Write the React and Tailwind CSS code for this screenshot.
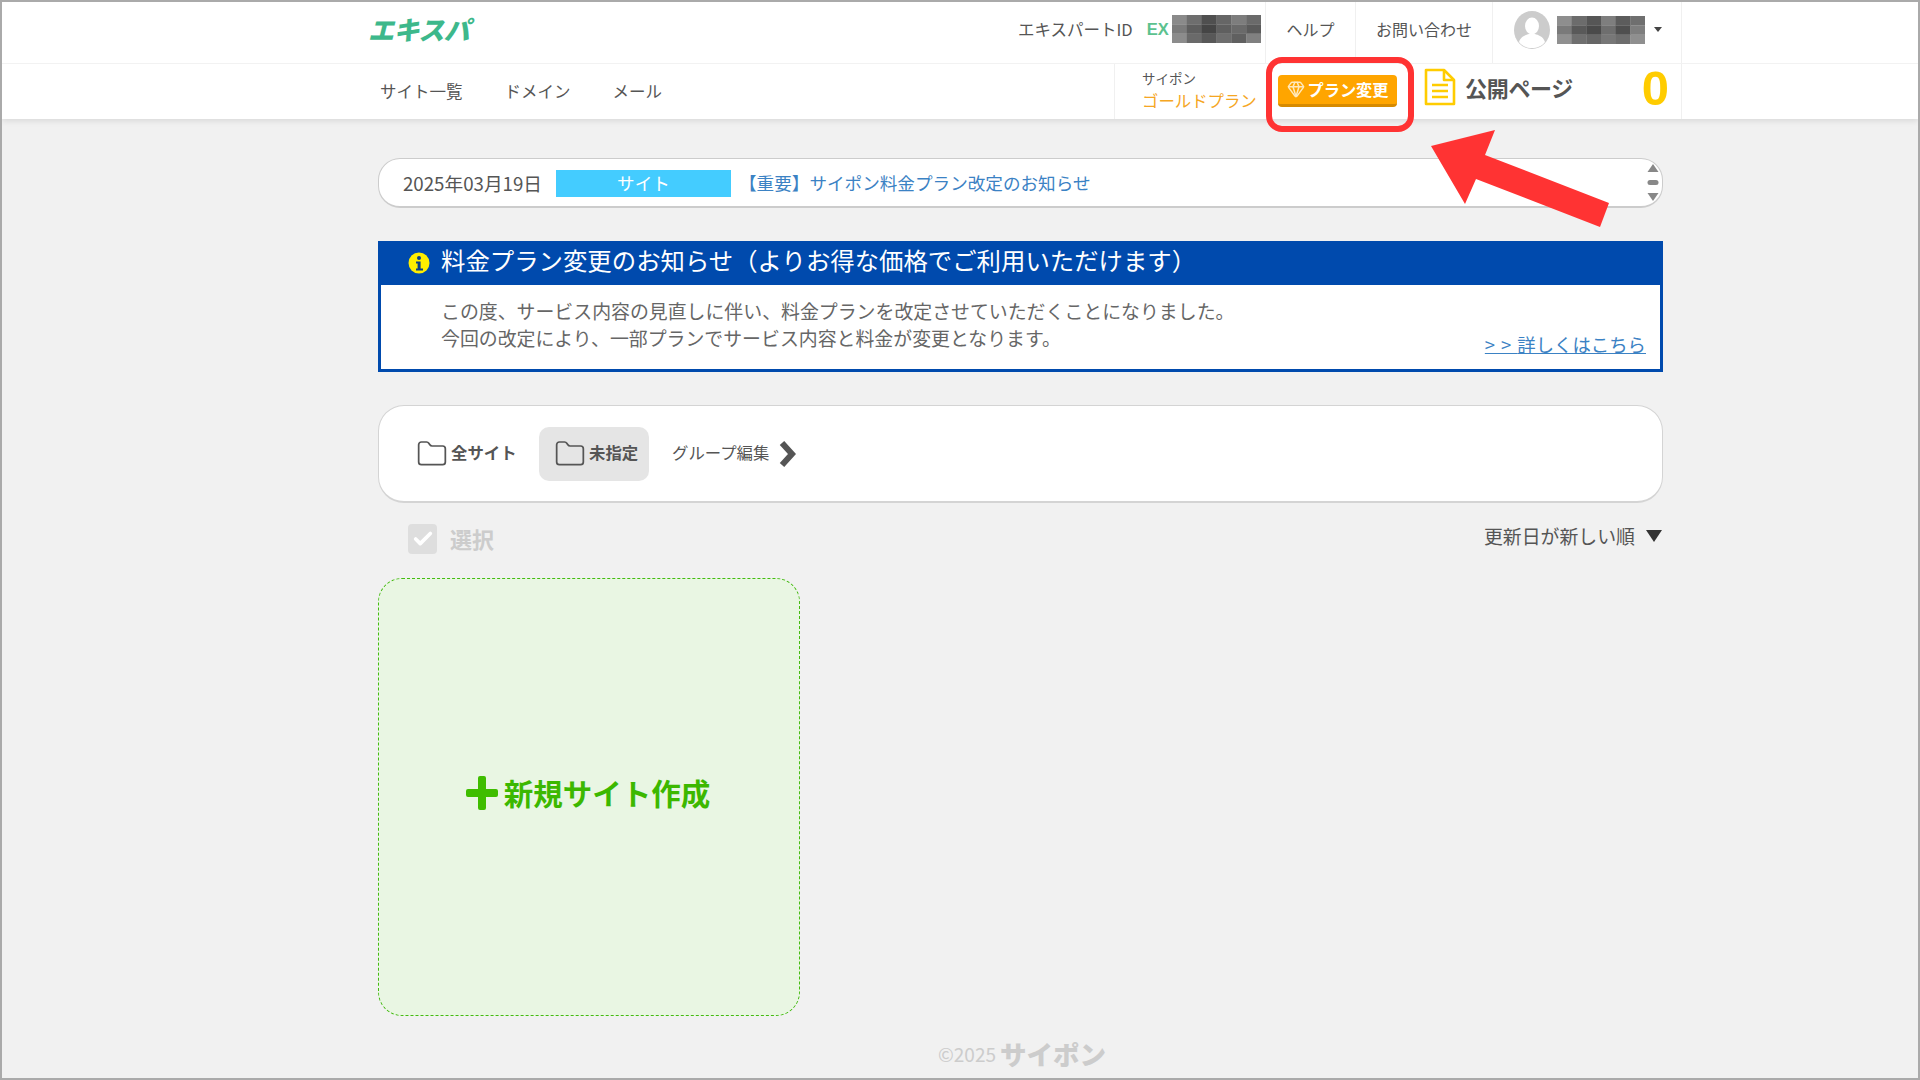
import { Check, Folder, Gem } from "lucide-react";

const JP = "font-['Noto_Sans_CJK_JP','Liberation_Sans',sans-serif]";

// blurred-out account names, drawn as a mosaic
const idCells = [
  ["#8a8a8a", "#6e6e6e", "#4f4f4f", "#666666", "#7d7d7d", "#6a6a6a"],
  ["#7b7b7b", "#5e5e5e", "#454545", "#5f5f5f", "#6a6a6a", "#5a5a5a"],
  ["#8c8c8c", "#6a6a6a", "#585858", "#6e6e6e", "#606060", "#808080"],
];
const nameCells = [
  ["#8e8e8e", "#6c6c6c", "#565656", "#7e7e7e", "#5c5c5c", "#6f6f6f"],
  ["#7a7a7a", "#595959", "#4a4a4a", "#6e6e6e", "#4f4f4f", "#7e7e7e"],
  ["#909090", "#6f6f6f", "#666666", "#777777", "#6d6d6d", "#8f8f8f"],
];

function Mosaic({ cells, className }) {
  return (
    <svg viewBox="0 0 6 3" preserveAspectRatio="none" className={className}>
      {cells.map((row, y) =>
        row.map((c, x) => <rect key={x + "-" + y} x={x} y={y} width="1.02" height="1.02" fill={c} />)
      )}
    </svg>
  );
}

function Avatar() {
  return (
    <svg viewBox="0 0 36 38" className="w-[36px] h-[38px]">
      <ellipse cx="18" cy="19" rx="18" ry="19" fill="#cccccc" />
      <ellipse cx="18" cy="15" rx="7" ry="8.5" fill="#fff" />
      <path d="M5 31c2-6 7-7 10-8h6c3 1 8 2 10 8-3 4-8 6-13 6s-10-2-13-6z" fill="#fff" />
    </svg>
  );
}

function DocIcon() {
  return (
    <svg viewBox="0 0 32 38" className="w-[32px] h-[38px]" fill="none" stroke="#ffcc00" strokeWidth="2.6">
      <path d="M2 2h18l10 10v24H2z" strokeLinejoin="round" />
      <path d="M20 2v10h10" strokeLinejoin="round" />
      <path d="M8 17h16M8 23h16M8 29h16" />
    </svg>
  );
}

function InfoIcon() {
  return (
    <svg viewBox="0 0 22 22" className="w-[22px] h-[22px] shrink-0">
      <circle cx="11" cy="11" r="10.5" fill="#ffee00" />
      <circle cx="11" cy="6" r="2" fill="#0b3f86" />
      <path d="M8 9.5h4.6v7H15v2H8v-2h1.6v-5H8z" fill="#0b3f86" />
    </svg>
  );
}

function ScrollArrows() {
  return (
    <svg viewBox="0 0 12 40" className="w-[12px] h-[40px]">
      <path d="M6 1l5.5 8H.5z" fill="#888" />
      <rect x="0.5" y="17" width="11" height="5" rx="2.5" fill="#888" />
      <path d="M.5 30h11L6 38z" fill="#888" />
    </svg>
  );
}

export default function App() {
  return (
    <div className={`${JP} relative h-[1080px] overflow-hidden border-2 border-[#aaaaaa] bg-[#f1f1f1] text-[#555555]`}>
      <header className="bg-white shadow-[0_2px_6px_rgba(0,0,0,0.1)]">
        {/* top row */}
        <div className="flex h-[62px] border-b border-[#f2f2f2] pl-[366px] pr-[236px]">
          <div className="flex items-center w-[280px] pb-[8px]">
            <span className="text-[26px] leading-none font-black italic tracking-[-0.5px] text-[#3db88b]">エキスパ</span>
          </div>
          <div className="ml-auto flex">
            <div className="flex items-center w-[247px] pb-[7px] text-[16.5px] text-[#555555]">
              <span>エキスパートID</span>
              <span className="ml-[14px] w-[26px] font-['Liberation_Sans',sans-serif] font-bold text-[#5cc28f]">EX</span>
              <Mosaic cells={idCells} className="w-[89px] h-[28px] -ml-[1px]" />
            </div>
            <div className="flex items-center justify-center w-[90px] pb-[7px] border-l border-[#f0f0f0] text-[16px]">ヘルプ</div>
            <div className="flex items-center justify-center w-[137px] pb-[7px] border-l border-[#f0f0f0] text-[16px]">お問い合わせ</div>
            <div className="flex items-center w-[190px] pb-[6px] border-x border-[#f0f0f0] pl-[21px]">
              <Avatar />
              <Mosaic cells={nameCells} className="ml-[7px] w-[88px] h-[28px]" />
              <span className="ml-[9px] h-0 w-0 border-x-[4px] border-t-[5px] border-x-transparent border-t-[#444444]"></span>
            </div>
          </div>
        </div>
        {/* second row */}
        <div className="flex h-[55px] pl-[378px] pr-[236px]">
          <nav className="flex items-center gap-[42px] text-[16.5px]">
            <span>サイト一覧</span>
            <span>ドメイン</span>
            <span>メール</span>
          </nav>
          <div className="ml-auto flex items-center w-[568px] border-x border-[#f0f0f0] pl-[27px]">
            <div className="w-[136px] -mt-[4px]">
              <div className="text-[13.5px] leading-[20px]">サイポン</div>
              <div className="text-[16.4px] leading-[24px] whitespace-nowrap text-[#f5a623]">ゴールドプラン</div>
            </div>
            <div className="flex items-center justify-center gap-[3px] w-[119px] h-[32px] -mt-[2px] rounded-[4px] bg-[#ffa500] border-b-[3px] border-[#d68a00] text-[16.2px] font-bold text-white">
              <Gem className="w-[18px] h-[18px] text-[#ffe9bd]" strokeWidth={2} />
              <span>プラン変更</span>
            </div>
            <div className="ml-[27px] -mt-[10px]">
              <DocIcon />
            </div>
            <span className="ml-[9px] -mt-[8px] text-[22px] font-bold tracking-[-0.3px] whitespace-nowrap">公開ページ</span>
            <span className="ml-auto mr-[12px] -mt-[6px] font-['Liberation_Sans',sans-serif] text-[49px] leading-none font-bold text-[#ffcc00]">0</span>
          </div>
        </div>
      </header>

      <main className="ml-[376px] w-[1285px] pt-[39px]">
        {/* news ticker */}
        <div className="flex items-center h-[50px] rounded-[22px] border border-[#cccccc] border-b-2 bg-white pl-[24px] pr-[2px] text-[17.6px]">
          <span className="w-[153px] whitespace-nowrap text-[18.7px] mt-[2px]">2025年03月19日</span>
          <span className="flex items-center justify-center w-[175px] h-[27px] mt-[1px] bg-[#44ccff] text-white">サイト</span>
          <span className="ml-[8px] mt-[2px] text-[#3b82c4]">【重要】サイポン料金プラン改定のお知らせ</span>
          <span className="ml-auto mr-[1px] flex">
            <ScrollArrows />
          </span>
        </div>

        {/* notice */}
        <section className="mt-[33px] h-[131px] border-[3px] border-[#004aad] bg-white">
          <div className="flex items-center h-[42px] -mt-[1px] pb-[3px] bg-[#004aad] pl-[27px] text-white">
            <InfoIcon />
            <span className="ml-[11px] -mt-[5px] text-[24.4px] leading-none whitespace-nowrap">料金プラン変更のお知らせ（よりお得な価格でご利用いただけます）</span>
          </div>
          <div className="relative pl-[60px] pt-[12px] text-[18.9px] leading-[27px] text-[#666666]">
            <p>この度、サービス内容の見直しに伴い、料金プランを改定させていただくことになりました。</p>
            <p>今回の改定により、一部プランでサービス内容と料金が変更となります。</p>
            <a className="absolute right-[14px] top-[47px] text-[18.4px] leading-[24px] underline text-[#3b82c4]">
              <span className="tracking-[6px]">&gt;&gt;</span>詳しくはこちら
            </a>
          </div>
        </section>

        {/* group tabs */}
        <div className="mt-[33px] flex items-center h-[98px] rounded-[26px] border border-[#d4d4d4] border-b-2 bg-white pl-[39px]">
          <div className="flex items-center w-[121px] pb-[3px] text-[16.4px] font-bold">
            <Folder className="w-[32px] h-[32px] mt-[3px] text-[#555555] -ml-[2px]" strokeWidth={1.3} />
            <span className="ml-[3px]">全サイト</span>
          </div>
          <div className="flex items-center w-[110px] h-[54px] rounded-[10px] bg-[#e5e5e5] pl-[17px] pb-[3px] text-[16.4px] font-bold">
            <Folder className="w-[32px] h-[32px] mt-[3px] text-[#555555] -ml-[2px]" strokeWidth={1.3} />
            <span className="ml-[3px]">未指定</span>
          </div>
          <span className="ml-[23px] pb-[2px] text-[16.4px]">グループ編集</span>
          <svg viewBox="0 0 18 26" className="ml-[9px] w-[18px] h-[26px]" fill="none" stroke="#555555" strokeWidth="6">
            <path d="M4 2l10 11L4 24" />
          </svg>
        </div>

        {/* select + sort */}
        <div className="flex h-[75px] pt-[20px]">
          <div className="flex items-start ml-[30px]">
            <span className="flex items-center justify-center w-[29px] h-[30px] mt-[1px] rounded-[4px] bg-[#dedede]">
              <Check className="w-[22px] h-[22px] text-white" strokeWidth={4} />
            </span>
            <span className="ml-[13px] text-[22px] leading-[30px] font-bold text-[#cccccc]">選択</span>
          </div>
          <div className="ml-auto flex items-start pr-[1px] text-[18.9px] leading-[26px]">
            <span>更新日が新しい順</span>
            <span className="ml-[11px] mt-[7px] h-0 w-0 border-x-[8px] border-t-[12px] border-x-transparent border-t-[#333333]"></span>
          </div>
        </div>

        {/* new site card */}
        <div className="flex items-center justify-center w-[422px] h-[438px] pb-[8px] pr-[2px] rounded-[24px] border-[1.5px] border-dashed border-[#44bb11] bg-[#e9f6e3]">
          <svg viewBox="0 0 32 34" className="w-[32px] h-[34px]">
            <path d="M12 2a2 2 0 0 1 2-2h4a2 2 0 0 1 2 2v11h10a2 2 0 0 1 2 2v4a2 2 0 0 1-2 2H20v11a2 2 0 0 1-2 2h-4a2 2 0 0 1-2-2V21H2a2 2 0 0 1-2-2v-4a2 2 0 0 1 2-2h10z" fill="#3fbd00" />
          </svg>
          <span className="ml-[6px] text-[29.5px] font-bold text-[#3cb800] leading-none whitespace-nowrap">新規サイト作成</span>
        </div>
      </main>

      <footer className="absolute left-0 right-0 top-[1036px] pl-[936px] flex items-center text-[#cccccc]">
        <span className="text-[19px]">©2025</span>
        <span className="ml-[4px] text-[26.5px] leading-[32px] font-black">サイポン</span>
      </footer>

      {/* annotation: red frame and arrow over the page */}
      <div className="absolute left-[1264px] top-[55px] w-[148px] h-[75px] rounded-[16px] border-[6px] border-[#ff3333]"></div>
      <svg className="absolute left-[1425px] top-[124px] w-[190px] h-[106px]" viewBox="1425 124 190 106">
        <polygon points="1429,144 1493,128 1483,153 1607,201 1598,225 1474,177 1463,202" fill="#ff3333" />
      </svg>
    </div>
  );
}
